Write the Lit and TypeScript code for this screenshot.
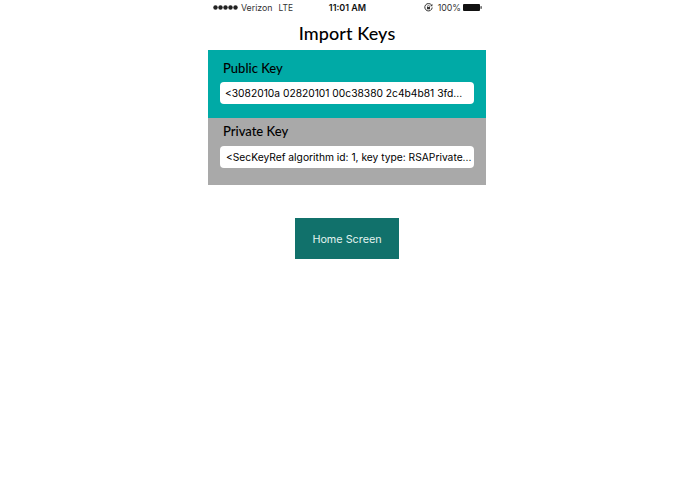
import { LitElement, html, css } from "lit";
import { customElement } from "lit/decorators.js";

@customElement("app-root")
export class AppRoot extends LitElement {
  static styles = css`
    :host { display: block; height: 494px; background: #fff; font-family: Inter, "Liberation Sans", Arial, sans-serif; color: #000; }
    .phone { width: 278px; margin-left: 208px; display: flex; flex-direction: column; }
    .status { height: 15px; display: grid; grid-template-columns: 1fr auto 1fr; align-items: center; font-size: 8.8px; color: #333; padding: 0 4px 0 5px; }
    .left { display: flex; align-items: center; gap: 3px; }
    .lte { margin-left: 3px; font-size: 8.4px; }
    .time { font-weight: 600; color: #111; font-size: 9px; }
    .right { display: flex; align-items: center; justify-content: flex-end; gap: 2px; }
    .lock { margin-right: 3px; }
    .title { height: 35px; display: flex; align-items: center; justify-content: center; font-family: Lato, sans-serif; font-size: 18px; font-weight: 500; letter-spacing: 0.1px; color: #000; }
    .section { display: flex; flex-direction: column; padding: 0 12px; box-sizing: border-box; }
    .pub { background: #00aaa6; height: 68px; padding-top: 10px; }
    .priv { background: #a9a9a9; height: 67px; padding-top: 5px; }
    .label { font-family: Lato, sans-serif; font-size: 13px; font-weight: 500; height: 17px; line-height: 17px; padding-left: 3px; color: #000; }
    .field { margin-top: 5px; height: 22px; border-radius: 4px; background: #fff; display: flex; align-items: center; padding: 0 5px; font-size: 10.25px; color: #000; white-space: nowrap; }
    .priv .field { margin-top: 6px; padding-left: 6px; }
    .action { display: flex; justify-content: center; margin-top: 33px; }
    .btn { width: 104px; height: 41px; background: #11716b; color: #e2f3ef; border: 0; font: 10.8px Inter, "Liberation Sans", Arial, sans-serif; padding: 1px 0 0; }
    svg { display: block; }
  `;

  render() {
    return html`
      <div class="phone">
        <div class="status">
          <div class="left">
            <svg width="25" height="5" viewBox="0 0 25 5" fill="#222">
              <circle cx="2.5" cy="2.5" r="2.2"></circle><circle cx="7.5" cy="2.5" r="2.2"></circle>
              <circle cx="12.5" cy="2.5" r="2.2"></circle><circle cx="17.5" cy="2.5" r="2.2"></circle>
              <circle cx="22.5" cy="2.5" r="2.2"></circle>
            </svg>
            <span>Verizon</span><span class="lte">LTE</span>
          </div>
          <div class="time">11:01 AM</div>
          <div class="right">
            <svg class="lock" width="9" height="9" viewBox="0 0 9 9" fill="none" stroke="#333">
              <path d="M7.6 2.2A3.7 3.7 0 1 0 8.2 4.5" stroke-width="1"></path>
              <path d="M8.4 0.8v2.4H6" fill="#333" stroke="none"></path>
              <rect x="3" y="4" width="3" height="2.3" fill="#333" stroke="none"></rect>
              <path d="M3.6 4V3.2a.9.9 0 0 1 1.8 0V4" stroke-width=".6"></path>
            </svg>
            <span>100%</span>
            <svg width="19" height="7" viewBox="0 0 19 7">
              <rect width="17" height="7" rx="1" fill="#111"></rect>
              <rect x="17.5" y="2.2" width="1.2" height="2.6" fill="#333"></rect>
            </svg>
          </div>
        </div>
        <div class="title">Import Keys</div>
        <section class="section pub">
          <div class="label">Public Key</div>
          <div class="field">&lt;3082010a 02820101 00c38380 2c4b4b81 3fd...</div>
        </section>
        <section class="section priv">
          <div class="label">Private Key</div>
          <div class="field">&lt;SecKeyRef algorithm id: 1, key type: RSAPrivate...</div>
        </section>
        <div class="action"><button class="btn">Home Screen</button></div>
      </div>
    `;
  }
}
